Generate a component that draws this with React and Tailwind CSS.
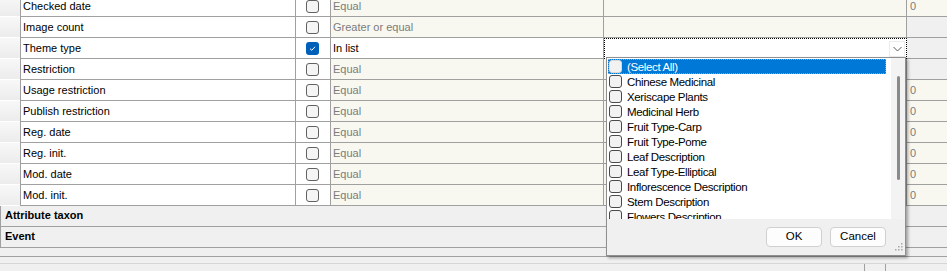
import React from 'react';

const rows = [
    { label: 'Checked date', op: 'Equal', zero: true },
    { label: 'Image count', op: 'Greater or equal' },
    { label: 'Theme type', op: 'In list', checked: true, active: true },
    { label: 'Restriction', op: 'Equal' },
    { label: 'Usage restriction', op: 'Equal', zero: true },
    { label: 'Publish restriction', op: 'Equal', zero: true },
    { label: 'Reg. date', op: 'Equal', zero: true },
    { label: 'Reg. init.', op: 'Equal', zero: true },
    { label: 'Mod. date', op: 'Equal', zero: true },
    { label: 'Mod. init.', op: 'Equal', zero: true },
];

const items = [
    '(Select All)',
    'Chinese Medicinal',
    'Xeriscape Plants',
    'Medicinal Herb',
    'Fruit Type-Carp',
    'Fruit Type-Pome',
    'Leaf Description',
    'Leaf Type-Elliptical',
    'Inflorescence Description',
    'Stem Description',
    'Flowers Description',
];

const Check = ({ checked }) => (
    <div
        className={
            checked
                ? 'w-[13px] h-[13px] rounded-[3px] bg-[#005fb8] flex items-center justify-center'
                : 'w-[13px] h-[13px] rounded-[3px] border border-[#616161] bg-[#f5f5f5]'
        }
    >
        {checked && (
            <svg width="9" height="9" viewBox="0 0 9 9">
                <path d="M2 4.6 L3.8 6.3 L7 2.8" stroke="#fff" strokeWidth="1" fill="none" />
            </svg>
        )}
    </div>
);

const Popup = () => (
    <div className="absolute left-[606px] top-[57px] w-[300px] h-[199px] border border-[#8f8f8f] bg-[#f0f0f0] flex flex-col shadow-[2px_2px_3px_rgba(0,0,0,0.35)]">
        <div className="h-[161px] flex">
            <div className="flex-1 bg-white overflow-hidden pl-[1px] pr-[5px] pt-[1px]">
                {items.map((it, i) => (
                    <div
                        key={it}
                        className={
                            'h-[15px] flex items-center gap-[5px] pl-[1px] ' +
                            (i === 0 ? 'bg-[#0078d7] text-white outline-1 outline-dotted outline-[#7aa9d8] -outline-offset-1' : 'text-black')
                        }
                    >
                        <div
                            className={
                                'w-[13px] h-[13px] rounded-[3px] border bg-[#f2f2f2] shrink-0 ' +
                                (i === 0 ? 'border-[#d9d9d9]' : 'border-[#4a4a4a]')
                            }
                        />
                        <span className="text-[11.5px] tracking-[-0.35px] leading-none pt-[2px]">{it}</span>
                    </div>
                ))}
            </div>
            <div className="w-[14px] bg-[#f3f3f3] pt-[18px] flex justify-center">
                <div className="w-[3px] h-[104px] rounded-full bg-[#8a8a8a]" />
            </div>
        </div>
        <div className="flex-1 relative flex justify-end items-start pt-[8px] pr-[19px] gap-[8px]">
            <button className="w-[56px] h-[20px] rounded-[4px] border border-[#d0d0d0] bg-[#fdfdfd] text-[11.5px] text-black">OK</button>
            <button className="w-[56px] h-[20px] rounded-[4px] border border-[#d0d0d0] bg-[#fdfdfd] text-[11.5px] text-black">Cancel</button>
            <svg className="absolute right-[2px] bottom-[4px]" width="8" height="8" viewBox="0 0 8 8">
                <rect x="6" y="0" width="1.5" height="1.5" fill="#a8a8a8" />
                <rect x="3" y="3" width="1.5" height="1.5" fill="#a8a8a8" />
                <rect x="6" y="3" width="1.5" height="1.5" fill="#a8a8a8" />
                <rect x="0" y="6" width="1.5" height="1.5" fill="#a8a8a8" />
                <rect x="3" y="6" width="1.5" height="1.5" fill="#a8a8a8" />
                <rect x="6" y="6" width="1.5" height="1.5" fill="#a8a8a8" />
            </svg>
        </div>
    </div>
);

const App = () => {
    return (
        <div
            className="relative w-[947px] h-[271px] overflow-hidden bg-[#f0f0f0] text-[11px]"
            style={{ fontFamily: '"Liberation Sans", Arial, sans-serif' }}
        >
            <div className="-mt-[4px]">
                {/* Attribute rows */}
                {rows.map((r) => (
                    <div key={r.label} className="flex h-[21px]">
                        <div className="w-[20px] bg-gradient-to-b from-[#f8f8f8] to-[#ececec] border-b border-white" />
                        <div className="w-[276px] bg-white border-l border-r border-b border-[#a0a0a0] flex items-center pl-[2px] text-black">
                            {r.label}
                        </div>
                        <div className="w-[35px] bg-white border-r border-b border-[#a0a0a0] flex items-center justify-center pr-[1px]">
                            <Check checked={r.checked} />
                        </div>
                        <div
                            className={
                                'w-[273px] border-r border-b border-[#a0a0a0] flex items-center pl-[2px] ' +
                                (r.active ? 'bg-white text-black' : 'bg-[#f9f8f0] text-[#7b7b7b]')
                            }
                        >
                            {r.op}
                        </div>
                        {r.active ? (
                            <div className="w-[303px] bg-white border border-dotted border-black flex items-center justify-end pr-[1px]">
                                <div className="w-[16px] h-[16px] bg-white border border-[#ececec] flex items-center justify-center">
                                    <svg width="9" height="6" viewBox="0 0 9 6">
                                        <path d="M0.5 1 L4.5 5 L8.5 1" stroke="#5c5c5c" strokeWidth="1" fill="none" />
                                    </svg>
                                </div>
                            </div>
                        ) : (
                            <div className="w-[303px] bg-[#f9f8f0] border-r border-b border-[#a0a0a0]" />
                        )}
                        <div
                            className={
                                'flex-1 border-b border-[#a0a0a0] flex items-center pl-[3px] ' +
                                (r.zero ? 'bg-[#f9f8f0] text-[#7b7b7b]' : 'bg-[#f0f0f0]')
                            }
                        >
                            {r.zero ? '0' : ''}
                        </div>
                    </div>
                ))}

                {/* Group rows */}
                {['Attribute taxon', 'Event'].map((g) => (
                    <div key={g} className="h-[21px] bg-[#f0f0f0] border-l border-b border-[#a0a0a0] flex items-center pl-[4px] pb-[1px] font-bold text-black">
                        {g}
                    </div>
                ))}

                <div className="h-[9px] border-b border-[#a0a0a0]" />
                <div className="h-[7px] border-b border-[#d6d6d6]" />
                <div className="h-[8px] flex">
                    <div className="w-[865px] border-r border-[#a0a0a0]" />
                    <div className="w-[21px] border-r border-[#a0a0a0]" />
                </div>
            </div>

            <Popup />
        </div>
    );
};

export default App;
